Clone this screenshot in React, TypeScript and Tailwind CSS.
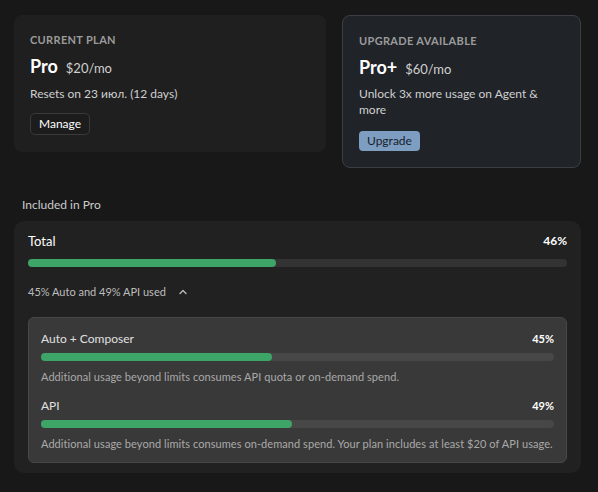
import React from "react";

type UsageRow = {
  label: string;
  percent: number;
  note: string;
};

const rows: UsageRow[] = [
  {
    label: "Auto + Composer",
    percent: 45,
    note: "Additional usage beyond limits consumes API quota or on-demand spend.",
  },
  {
    label: "API",
    percent: 49,
    note: "Additional usage beyond limits consumes on-demand spend. Your plan includes at least $20 of API usage.",
  },
];

const Bar: React.FC<{ percent: number; track?: string }> = ({ percent, track = "bg-[#333333]" }) => (
  <div className={`h-2 w-full rounded-full ${track}`}>
    <div className="h-2 rounded-full bg-[#3da568]" style={{ width: `${percent}%` }} />
  </div>
);

const ChevronUp = () => (
  <svg width="10" height="10" viewBox="0 0 10 10" fill="none" stroke="currentColor" strokeWidth="1.3">
    <path d="M2 6.5 L5 3.5 L8 6.5" strokeLinecap="round" strokeLinejoin="round" />
  </svg>
);

export default function App() {
  return (
    <div
      className="min-h-screen w-full bg-[#181818] px-[14px] pt-[15px] text-[#e6e6e6]"
      style={{ fontFamily: 'Lato, "Noto Sans", sans-serif' }}
    >
      <div className="flex w-[567px] items-start gap-4">
        {/* current plan */}
        <div className="flex h-[137px] w-[312px] flex-col items-start rounded-lg bg-[#1f1f1f] px-4 pt-[17px]">
          <div className="text-[11px] font-bold uppercase leading-4 tracking-[0.03em] text-[#9b9b9b]">
            Current plan
          </div>
          <div className="mt-[6px] flex items-baseline gap-2">
            <span className="text-[18px] font-bold leading-6 text-white">Pro</span>
            <span className="text-[13px] text-[#d0d0d0]">$20/mo</span>
          </div>
          <div className="mt-[7px] text-[12px] leading-4 text-[#cfcfcf]">Resets on 23 июл. (12 days)</div>
          <button
            type="button"
            className="mt-[11px] flex h-[22px] items-center rounded-[5px] border border-[#3a3a3a] bg-[#1c1c1c] px-2 text-[12px] text-white"
          >
            Manage
          </button>
        </div>

        {/* upgrade offer */}
        <div className="flex h-[153px] w-[239px] flex-col items-start rounded-lg border border-[#3b3f44] bg-[#202328] px-4 pt-[17px]">
          <div className="text-[11px] font-bold uppercase leading-4 tracking-[0.03em] text-[#9b9b9b]">
            Upgrade available
          </div>
          <div className="mt-[6px] flex items-baseline gap-2">
            <span className="text-[18px] font-bold leading-6 text-white">Pro+</span>
            <span className="text-[13px] text-[#d0d0d0]">$60/mo</span>
          </div>
          <div className="mt-[6px] w-[200px] text-[12px] leading-4 text-[#cfcfcf]">
            Unlock 3x more usage on Agent &amp; more
          </div>
          <button
            type="button"
            className="mt-[13px] flex h-[20px] items-center rounded-[4px] bg-[#7d9ec1] px-2 text-[12px] text-[#16212d]"
          >
            Upgrade
          </button>
        </div>
      </div>

      <div className="mt-[29px] pl-2 text-[12px] leading-4 text-[#cccccc]">Included in Pro</div>

      {/* usage summary */}
      <div className="mt-[8px] w-[567px] rounded-[10px] bg-[#212121] px-[14px] pb-[10px] pt-[10px]">
        <div className="flex items-center justify-between">
          <span className="text-[13px] leading-5 text-white">Total</span>
          <span className="text-[12px] font-bold leading-5 text-white">46%</span>
        </div>
        <div className="mt-[8px]">
          <Bar percent={46} />
        </div>
        <div className="mt-[17px] flex items-center gap-[12px] text-[11px] leading-4 text-[#bdbdbd]">
          <span>45% Auto and 49% API used</span>
          <ChevronUp />
        </div>

        <div className="mt-[17px] rounded-md border border-[#474747] bg-[#393939] px-3 pb-[10px] pt-[13px]">
          {rows.map((row, i) => (
            <div key={row.label} className={i > 0 ? "mt-[13px]" : ""}>
              <div className="flex items-center justify-between">
                <span className="text-[12px] leading-4 text-[#e0e0e0]">{row.label}</span>
                <span className="text-[11px] font-bold leading-4 text-white">{row.percent}%</span>
              </div>
              <div className="mt-[6px]">
                <Bar percent={row.percent} track="bg-[#474747]" />
              </div>
              <div className="mt-[8px] whitespace-nowrap text-[11px] leading-4 tracking-[0.006em] text-[#a9a9a9]">
                {row.note}
              </div>
            </div>
          ))}
        </div>
      </div>
    </div>
  );
}
